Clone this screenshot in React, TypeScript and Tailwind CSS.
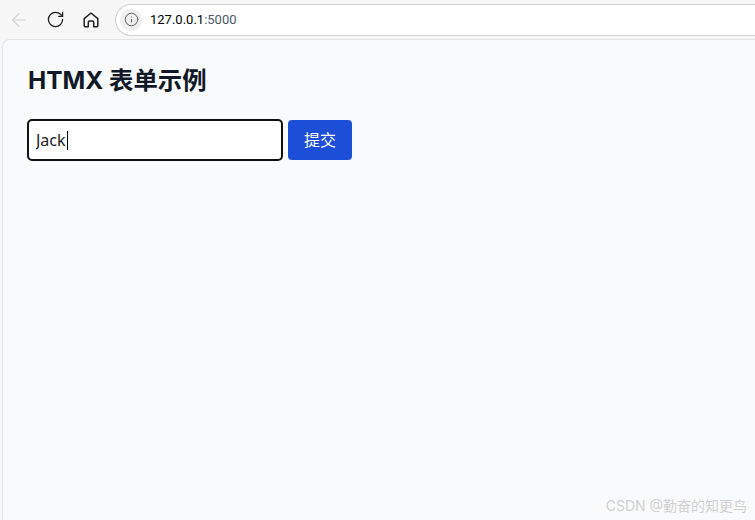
import { ArrowLeft, RotateCw, Info } from "lucide-react"

const sans = "font-['Inter','Noto_Sans_CJK_SC',sans-serif]"

function HomeIcon() {
  return (
    <svg width="18" height="18" viewBox="0 0 18 18" fill="none" stroke="#1f1f1f" strokeWidth="1.5" strokeLinejoin="round">
      <path d="M2.2 7.6 9 2l6.8 5.6v7a1.2 1.2 0 0 1-1.2 1.2h-2.9v-4.6a1.2 1.2 0 0 0-1.2-1.2H7.5a1.2 1.2 0 0 0-1.2 1.2v4.6H3.4a1.2 1.2 0 0 1-1.2-1.2z" />
    </svg>
  )
}

export default function App() {
  return (
    <div className={`relative flex h-[520px] w-[755px] flex-col overflow-hidden bg-[#f7f7f7] ${sans}`}>
      {/* browser toolbar */}
      <div className="flex h-[39px] shrink-0 items-center pl-[8px]">
        <ArrowLeft className="h-[22px] w-[22px] text-[#d2d2d2]" strokeWidth={1.3} />
        <RotateCw className="ml-[16px] h-[19px] w-[19px] text-[#1f1f1f]" strokeWidth={1.6} />
        <div className="ml-[17px]">
          <HomeIcon />
        </div>
        <div className="ml-[15px] flex h-[32px] flex-1 items-center rounded-l-full border-y-[1.5px] border-l-[1.5px] border-[#d0d0d0] bg-white pl-[4px]">
          <div className="flex h-[22px] w-[22px] items-center justify-center rounded-full bg-[#efefef]">
            <Info className="h-[15px] w-[15px] text-[#5f5f5f]" strokeWidth={1.6} />
          </div>
          <span className="ml-[8px] font-['Roboto',sans-serif] text-[13px] text-black">
            127.0.0.1<span className="text-[#4d5a6a]">:5000</span>
          </span>
        </div>
      </div>

      {/* page */}
      <div className="ml-[2px] flex-1 rounded-tl-lg border-t border-l border-[#e4e4e4] bg-[#f9fafb] pt-[24px] pl-[24px]">
        <h1 className="ml-px text-[24.4px] leading-8 font-bold text-[#111827]">HTMX 表单示例</h1>
        <form className="mt-[23px] flex items-center gap-[5px]">
          <div className="relative">
            <input
              readOnly
              value="Jack"
              className="block h-[42px] w-[256px] rounded-[5px] border-2 border-[#111111] bg-white px-[7px] font-['Noto_Sans',sans-serif] text-base text-[#222222] outline-none"
            />
            <span className="absolute top-[12px] left-[40px] h-[19px] w-px bg-black" />
          </div>
          <button type="button" className="h-10 w-16 rounded bg-[#1d4ed8] text-base text-white">
            提交
          </button>
        </form>
      </div>

      {/* watermark */}
      <span className="absolute right-[8px] bottom-[4px] text-sm text-[#d0d0d0]">CSDN @勤奋的知更鸟</span>
    </div>
  )
}
